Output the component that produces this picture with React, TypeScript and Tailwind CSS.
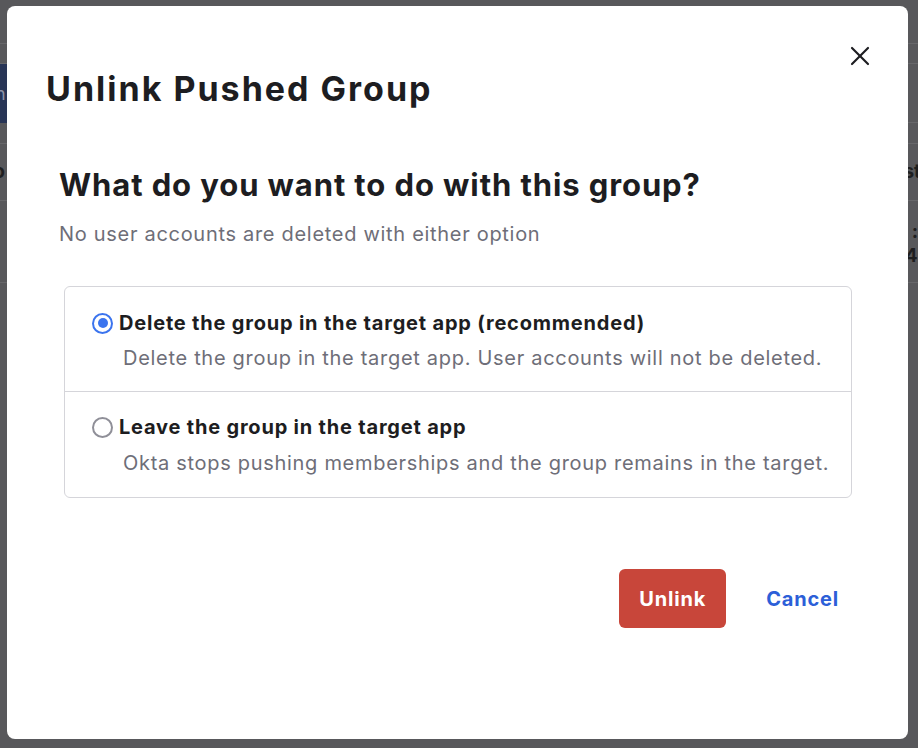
import { X } from 'lucide-react';

const font = { fontFamily: 'Inter, "Liberation Sans", sans-serif' };

const Radio = ({ checked }: { checked: boolean }) => (
  <span
    className={`flex h-[21px] w-[21px] shrink-0 items-center justify-center rounded-full border-[2.5px] ${
      checked ? 'border-[#3b74ee]' : 'border-[#8f8f98]'
    } bg-white`}
  >
    {checked && <span className="h-[10px] w-[10px] rounded-full bg-[#3b74ee]" />}
  </span>
);

const Option = ({
  checked,
  label,
  desc,
  className,
}: {
  checked: boolean;
  label: string;
  desc: string;
  className: string;
}) => (
  <div className={`pl-[27px] pr-[16px] ${className}`}>
    <div className="flex h-[24px] items-center gap-[6px]">
      <Radio checked={checked} />
      <span className="text-[20px] font-bold leading-[24px] tracking-[0.8px] text-[#1d1d21]">{label}</span>
    </div>
    <p className="pl-[31px] text-[20px] leading-[24px] tracking-[0.7px] text-[#6e6e78]">{desc}</p>
  </div>
);

const App = () => {
  return (
    <div className="relative h-[748px] w-[918px] overflow-hidden bg-[#58585b]" style={font}>
      {/* dimmed page behind the dialog */}
      <div className="flex flex-col">
        <div className="h-[44px] border-b border-[#67676a]" />
        <div className="h-[20px] border-b border-[#67676a]" />
        <div className="flex h-[59px] items-center border-b border-[#67676a]">
          <div className="flex h-[59px] w-[10px] items-center overflow-hidden bg-[#283556] text-[18px] text-[#8d93a6]">
            <span className="-ml-[5px]">n</span>
          </div>
        </div>
        <div className="h-[21px] border-b border-[#67676a]" />
        <div className="flex h-[57px] items-center justify-between border-b border-[#67676a]">
          <span className="-ml-[14px] text-[19px] font-bold text-[#1e1e20]">ro</span>
          <span className="-mr-[3px] text-[19px] font-bold text-[#1e1e20]">st</span>
        </div>
        <div className="flex h-[82px] flex-col items-end justify-center border-b border-[#67676a] pt-[4px]">
          <span className="text-[19px] font-bold leading-[24px] text-[#1e1e20]">:</span>
          <span className="-mr-[6px] text-[19px] font-bold leading-[24px] text-[#1e1e20]">4:</span>
        </div>
      </div>

      {/* dialog */}
      <div className="absolute left-[7px] top-[6px] h-[733px] w-[901px] rounded-[8px] bg-white">
        <button className="absolute right-[32px] top-[34px] text-[#1d1d21]">
          <X className="h-[32px] w-[32px]" strokeWidth={1.6} />
        </button>

        <h1 className="pl-[39px] pt-[63px] text-[34px] font-bold leading-[40px] tracking-[2px] text-[#1d1d21]">
          Unlink Pushed Group
        </h1>

        <div className="px-[52px] pt-[57px]">
          <h2 className="text-[31px] font-bold leading-[38px] tracking-[0.9px] text-[#1d1d21]">
            What do you want to do with this group?
          </h2>
          <p className="mt-[18px] text-[20px] leading-[24px] tracking-[0.7px] text-[#6e6e78]">
            No user accounts are deleted with either option
          </p>
        </div>

        <div className="ml-[57px] mr-[56px] mt-[40px] rounded-[6px] border border-[#d5d5da]">
          <Option
            checked
            label="Delete the group in the target app (recommended)"
            desc="Delete the group in the target app. User accounts will not be deleted."
            className="flex flex-col gap-[11px] border-b border-[#d5d5da] pt-[24px] pb-[21px]"
          />
          <Option
            checked={false}
            label="Leave the group in the target app"
            desc="Okta stops pushing memberships and the group remains in the target."
            className="flex flex-col gap-[12px] pt-[23px] pb-[22px]"
          />
        </div>

        <div className="mt-[71px] flex items-center justify-end gap-[40px] pr-[69px]">
          <button className="flex h-[59px] w-[107px] items-center justify-center rounded-[6px] bg-[#c8463a] text-[20px] font-bold tracking-[0.8px] text-white">
            Unlink
          </button>
          <button className="text-[20px] font-bold tracking-[0.8px] text-[#2c5fd8]">Cancel</button>
        </div>
      </div>
    </div>
  );
};

export default App;
